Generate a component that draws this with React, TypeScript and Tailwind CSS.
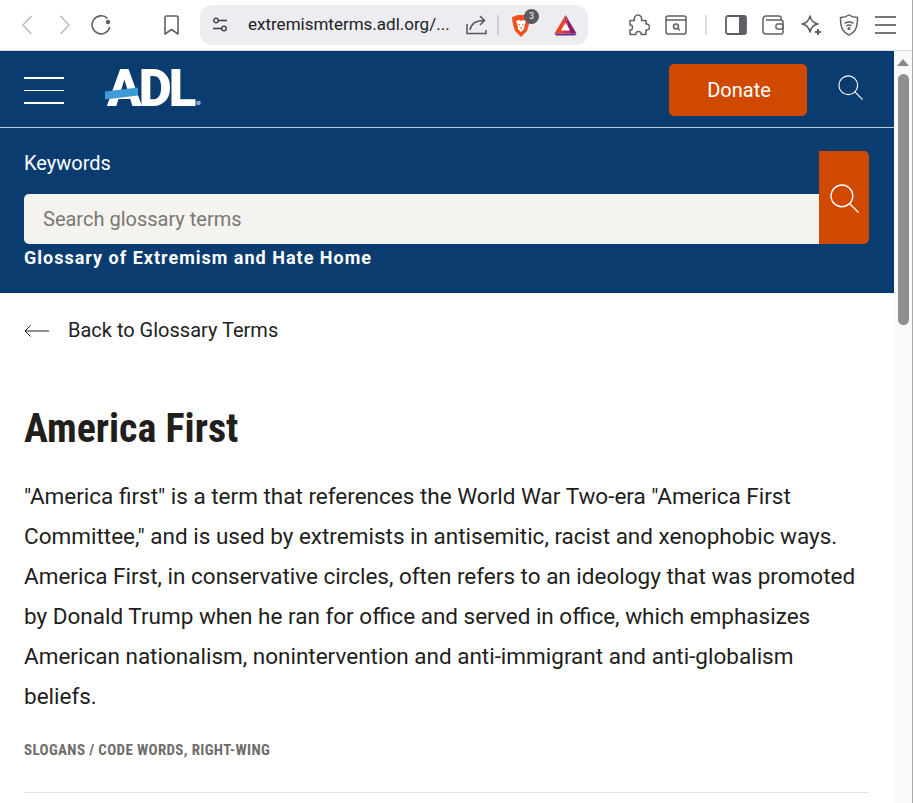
import React from "react";

const SearchGlyph: React.FC<{ size: number }> = ({ size }) => (
  <svg width={size} height={size} viewBox="0 0 28 28" fill="none" stroke="currentColor" strokeWidth="1.3">
    <circle cx="11.5" cy="11.5" r="10.5" />
    <path d="M19 19l8.5 8.5" />
  </svg>
);

const BrowserBar = () => (
  <div className="h-[51px] bg-white border-b border-[#dcdcdc] flex items-center text-[#5f6065] shrink-0">
    <svg className="ml-[22px] text-[#b9b9bb]" width="10" height="20" viewBox="0 0 10 20" fill="none" stroke="currentColor" strokeWidth="1.5">
      <path d="M9.500 1L1 10l8.500 9" />
    </svg>
    <svg className="ml-[28px] text-[#b9b9bb]" width="10" height="20" viewBox="0 0 10 20" fill="none" stroke="currentColor" strokeWidth="1.5">
      <path d="M.5 1L9 10l-8.500 9" />
    </svg>
    <svg className="ml-[21px]" width="20" height="20" viewBox="0 0 20 20" fill="none" stroke="currentColor" strokeWidth="1.6">
      <path d="M16.500 3.500A9 9 0 1 0 18.800 12" />
      <circle cx="17" cy="7" r="2.200" fill="currentColor" stroke="none" />
    </svg>
    <svg className="ml-[53px]" width="15" height="20" viewBox="0 0 15 20" fill="none" stroke="currentColor" strokeWidth="1.6" strokeLinejoin="round">
      <path d="M1 2.500A1.500 1.500 0 0 1 2.500 1h10A1.500 1.500 0 0 1 14 2.500V19l-6.500-4.500L1 19z" />
    </svg>
    <div className="ml-[21px] w-[388px] h-[40px] rounded-[12px] bg-[#edecf1] flex items-center">
      <svg className="ml-[12px] shrink-0" width="16" height="16" viewBox="0 0 16 16" fill="none" stroke="#3b3b3f" strokeWidth="1.3">
        <circle cx="4" cy="3.5" r="2.3" />
        <path d="M7 3.5h8M1 11.5h8" />
        <circle cx="12" cy="11.5" r="2.3" />
      </svg>
      <span className="ml-[20px] w-[201px] shrink-0 text-[17px] text-[#202124] whitespace-nowrap">extremismterms.adl.org/...</span>
      <svg className="ml-[17px] shrink-0" width="21" height="20" viewBox="0 0 21 20" fill="none" stroke="#55565a" strokeWidth="1.5">
        <path d="M1 9v9.500h19V15" />
        <path d="M4 15c1-6 6-9.500 14-9.500" />
        <path d="M14 1l4.500 4.500L14 10" />
      </svg>
      <div className="ml-[10px] w-[2px] h-[20px] bg-[#cfced3] shrink-0" />
      <div className="relative ml-[12px] shrink-0 w-[20px] h-[24px] mt-[1px]">
        <svg width="20" height="24" viewBox="0 0 20 24">
          <path d="M3 2.500L6.500 1h7L17 2.500l2 .5-.5 5.500L16 17l-6 6-6-6-2.500-8.500L1 3z" fill="#f4511e" />
          <path d="M5 7l3-1 2 1 2-1 3 1-1.500 4L13 15l-3 3-3-3-.5-4z" fill="#fff" />
          <path d="M8 10l1 1M12 10l-1 1M9 14h2" stroke="#f4511e" strokeWidth="1" />
        </svg>
        <div className="absolute left-[13px] top-[-5px] w-[15px] h-[15px] rounded-full bg-[#585a60] text-white text-[9px] leading-[15px] text-center">3</div>
      </div>
      <svg className="ml-[23px] shrink-0" width="23" height="21" viewBox="0 0 23 21">
        <path d="M11.500 0L.5 18.500h7z" fill="#f0441e" />
        <path d="M11.500 0L22.500 18.500h-7z" fill="#8a1b6e" />
        <path d="M.5 18.500h22L21 20.500H2z" fill="#662d91" />
        <path d="M11.500 0L7.500 18.500h8z" fill="#d0304a" />
        <path d="M11.500 7.500l4.500 8H7z" fill="#fff" />
      </svg>
    </div>
    <svg className="ml-[40px]" width="22" height="22" viewBox="0 0 22 22" fill="none" stroke="currentColor" strokeWidth="1.5" strokeLinejoin="round">
      <path d="M2 6.500h4.500c-.8-3 1-5.500 3.500-5.500s4.300 2.500 3.500 5.500h4.500v3.500c2.500-.5 3.500 1.500 3.500 3s-1 3.500-3.500 3v4.500h-5c.5-2-1-3-2.500-3s-3 1-2.500 3H2v-4.500c1.800.3 2.500-1 2.500-2.500S3.800 10.500 2 11z" />
    </svg>
    <svg className="ml-[15px]" width="22" height="20" viewBox="0 0 22 20" fill="none" stroke="currentColor" strokeWidth="1.500">
      <rect x="1" y="1" width="20" height="18" rx="2" />
      <path d="M1 5h20" />
      <circle cx="11" cy="11.500" r="2.500" />
      <path d="M13 13.500l2 2" />
    </svg>
    <div className="ml-[18px] w-[2px] h-[20px] bg-[#dedee2]" />
    <svg className="ml-[18px]" width="22" height="20" viewBox="0 0 22 20">
      <rect x="1" y="1" width="20" height="18" rx="2" fill="none" stroke="currentColor" strokeWidth="1.800" />
      <rect x="14" y="1" width="7" height="18" fill="currentColor" />
    </svg>
    <svg className="ml-[15px]" width="22" height="20" viewBox="0 0 22 20" fill="none" stroke="currentColor" strokeWidth="1.500">
      <path d="M19 5V3a2 2 0 0 0-2-2H4a3 3 0 0 0-3 3v12a3 3 0 0 0 3 3h15a2 2 0 0 0 2-2V7a2 2 0 0 0-2-2H4" />
      <rect x="14" y="9" width="7" height="5" rx="1.500" />
    </svg>
    <svg className="ml-[16px]" width="23" height="23" viewBox="0 0 23 23" fill="none" stroke="currentColor" strokeWidth="1.500">
      <path d="M10 2c1 5 3 7 8 8-5 1-7 3-8 8-1-5-3-7-8-8 5-1 7-3 8-8z" strokeLinejoin="round" />
      <path d="M18 15v6M15 18h6" strokeWidth="2" />
    </svg>
    <svg className="ml-[16px]" width="20" height="22" viewBox="0 0 20 22" fill="none" stroke="currentColor" strokeWidth="1.500">
      <path d="M10 1c3 2 5 2.500 8.500 2.500 0 8-1 14-8.500 17.500C2.500 17.500 1.500 11.500 1.500 3.500 5 3.500 7 3 10 1z" />
      <path d="M5.500 9.500c2.500-2.300 6.500-2.300 9 0M7.500 12c1.500-1.300 3.500-1.300 5 0" />
      <circle cx="10" cy="14.500" r=".8" fill="currentColor" />
    </svg>
    <div className="ml-[16px] w-[21px] flex flex-col gap-[6px]">
      <div className="h-[2px] bg-[#77787c]" />
      <div className="h-[2px] bg-[#77787c]" />
      <div className="h-[2px] bg-[#77787c]" />
    </div>
  </div>
);

const SiteHeader = () => (
  <header className="bg-[#0a3c70] text-white">
    <div className="h-[77px] border-b border-[#b9c8d8] flex items-center pl-[24px] pr-[31px]">
      <div className="w-[40px] mt-[3px] flex flex-col gap-[11px]">
        <div className="h-[2px] bg-white" />
        <div className="h-[1px] bg-white" />
        <div className="h-[2px] bg-white" />
      </div>
      <div className="relative ml-[41px] w-[98px] h-[40px]">
        <span className="absolute left-[2px] top-[-6px] text-[51px] leading-[51px] font-black tracking-[-3px]">ADL</span>
        <svg className="absolute left-0 top-0" width="98" height="40" viewBox="0 0 98 40">
          <path d="M0 22.500l33-4v8L0 30.500z" fill="#3f9bd6" />
          <circle cx="93.500" cy="34" r="2.300" fill="#8fa9c5" />
        </svg>
      </div>
      <button className="ml-auto mt-[2px] pl-[2px] w-[138px] h-[52px] rounded-[5px] bg-[#cf4a00] text-[20px] leading-none">Donate</button>
      <div className="ml-[31px] -mt-[4px]">
        <SearchGlyph size={25} />
      </div>
    </div>
    <div className="h-[165px] pl-[24px] pr-[25px] relative">
      <div className="pt-[23px] text-[20px] leading-[24px]">Keywords</div>
      <div className="mt-[19px] h-[50px] w-[795px] rounded-l-[5px] bg-[#f5f3ef] pl-[19px] flex items-center text-[20px] text-[#7a7775]">
        Search glossary terms
      </div>
      <div className="mt-[4px] text-[18px] leading-[20px] font-bold tracking-[1px]">Glossary of Extremism and Hate Home</div>
      <div className="absolute right-[25px] top-[23px] w-[50px] h-[93px] rounded-r-[5px] bg-[#cf4a00] flex items-center justify-center pt-[1px]">
        <SearchGlyph size={29} />
      </div>
    </div>
  </header>
);

const App = () => (
  <div className="w-[913px] h-[803px] overflow-hidden flex bg-white font-['Roboto',sans-serif]">
    <div className="w-[912px] shrink-0 flex flex-col">
      <BrowserBar />
      <div className="flex flex-1 min-h-0">
        <div className="w-[894px] shrink-0">
          <SiteHeader />
          <main className="pl-[24px] pr-[25px]">
            <div className="h-[75px] flex items-center text-[20px] text-[#211e1c]">
              <svg width="25" height="12" viewBox="0 0 25 12" fill="none" stroke="currentColor" strokeWidth="1">
                <path d="M25 6H1M6.500.5L1 6l5.500 5.500" />
              </svg>
              <span className="ml-[19px] pb-[2px]">Back to Glossary Terms</span>
            </div>
            <h1 className="mt-[38px] text-[40px] leading-[46px] font-bold text-[#211e1c] [font-stretch:75%]">America First</h1>
            <p className="mt-[24px] text-[22.5px] leading-[40px] text-[#211e1c]">
              "America first" is a term that references the World War Two-era "America First Committee," and is used by extremists in antisemitic, racist and xenophobic ways. America First, in conservative circles, often refers to an ideology that was promoted by Donald Trump when he ran for office and served in office, which emphasizes American nationalism, nonintervention and anti-immigrant and anti-globalism beliefs.
            </p>
            <div className="mt-[25px] text-[15px] leading-[18px] font-bold text-[#6f6d6b] [font-stretch:75%] tracking-[0.35px]">SLOGANS / CODE WORDS, RIGHT-WING</div>
            <div className="mt-[33px] h-[1px] bg-[#e2e2e2]" />
          </main>
        </div>
        <div className="flex-1 bg-[#fafafa] relative">
          <div className="mx-auto mt-[8px] w-0 h-0 border-l-[6px] border-r-[6px] border-b-[7px] border-l-transparent border-r-transparent border-b-[#8a8a8a]" />
          <div className="absolute left-[4px] top-[23px] w-[11px] h-[251px] rounded-full bg-[#8f8f8f]" />
        </div>
      </div>
    </div>
    <div className="w-[1px] bg-[#a8a8a8]" />
  </div>
);

export default App;
